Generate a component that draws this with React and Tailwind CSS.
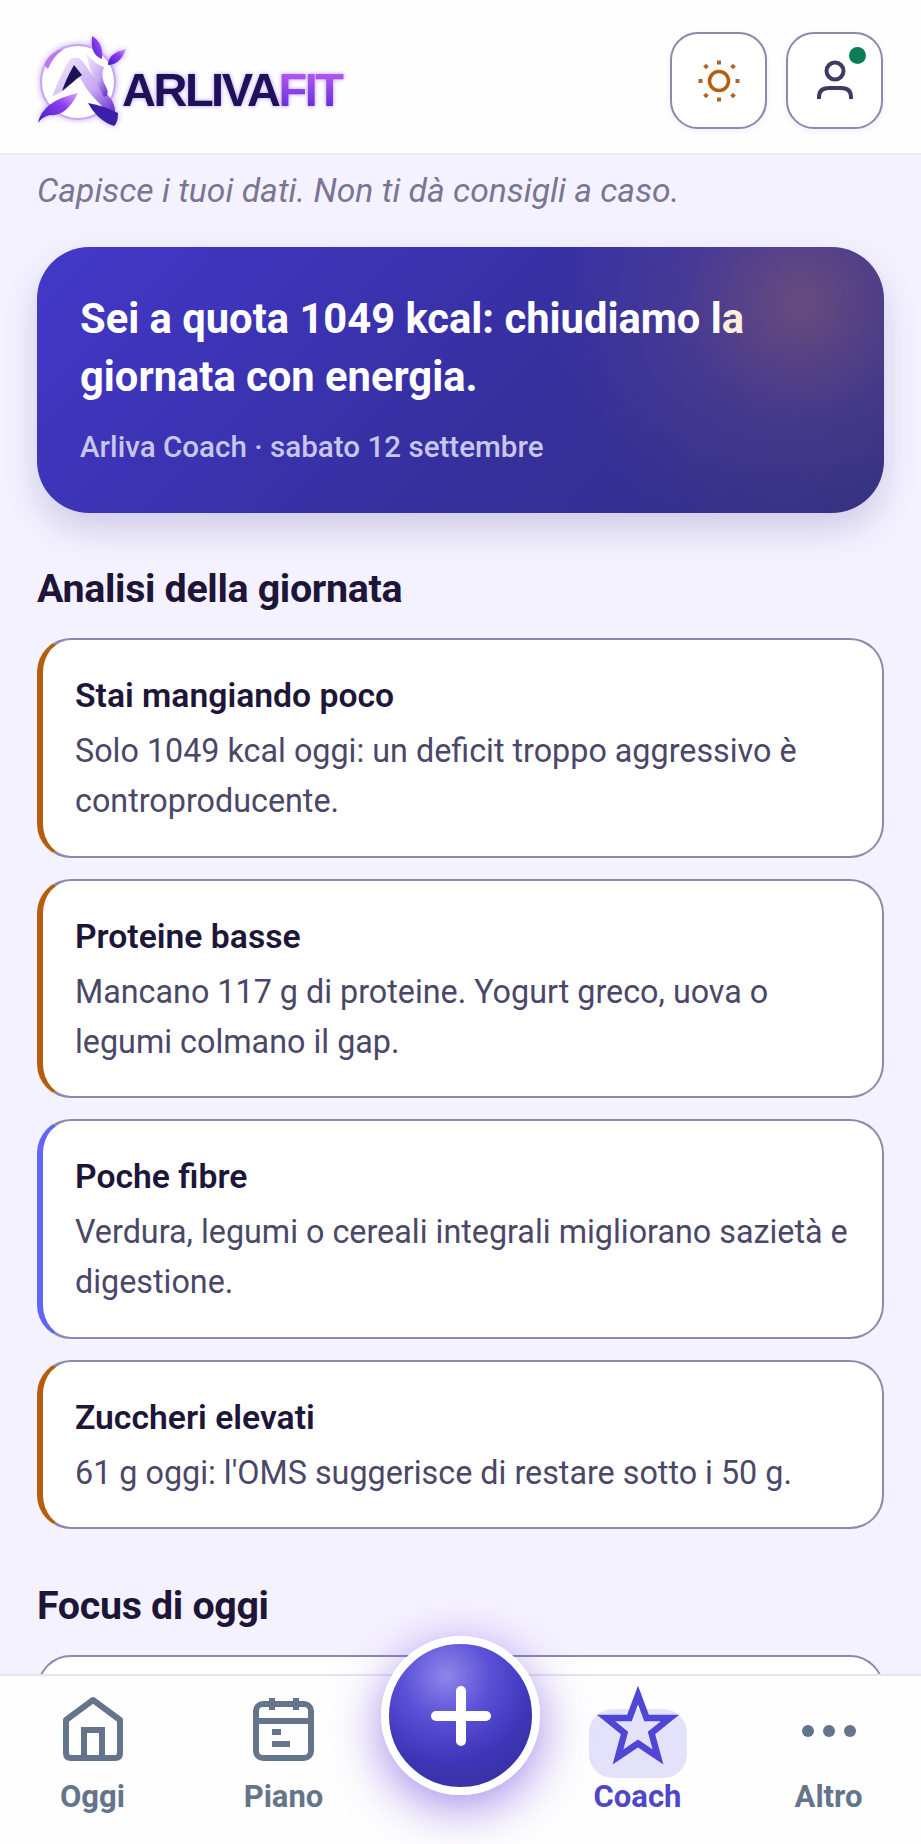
import React from "react";

const insights = [
    {
        title: "Stai mangiando poco",
        text: "Solo 1049 kcal oggi: un deficit troppo aggressivo è controproducente.",
        edge: "border-l-[#b45f10]",
    },
    {
        title: "Proteine basse",
        text: "Mancano 117 g di proteine. Yogurt greco, uova o legumi colmano il gap.",
        edge: "border-l-[#b45f10]",
    },
    {
        title: "Poche fibre",
        text: "Verdura, legumi o cereali integrali migliorano sazietà e digestione.",
        edge: "border-l-[#6366f1]",
    },
    {
        title: "Zuccheri elevati",
        text: "61 g oggi: l'OMS suggerisce di restare sotto i 50 g.",
        edge: "border-l-[#b45f10]",
    },
];

const LogoMark = () => (
    <svg width="96" height="92" viewBox="0 0 96 92" className="shrink-0 drop-shadow-[0_0_3px_#c4a5f5]">
        <defs>
            <linearGradient id="leaf" x1="0" y1="1" x2="1" y2="0">
                <stop offset="0" stopColor="#3b1fc4" />
                <stop offset="0.6" stopColor="#8b3df0" />
                <stop offset="1" stopColor="#d9a6f7" />
            </linearGradient>
            <linearGradient id="body" x1="0" y1="0" x2="1" y2="1">
                <stop offset="0" stopColor="#f6efff" />
                <stop offset="0.6" stopColor="#c7a6f2" />
                <stop offset="1" stopColor="#5a22c9" />
            </linearGradient>
        </defs>
        <circle cx="42" cy="47" r="37" fill="#fff" stroke="#c9a4f2" strokeWidth="2" />
        <path d="M8 30 Q14 16 28 14 Q18 20 12 34Z" fill="#b77bf0" />
        <path d="M56 1 Q68 8 66 24 Q54 20 56 1Z" fill="url(#leaf)" />
        <path d="M90 14 Q84 30 72 30 Q72 18 90 14Z" fill="url(#leaf)" />
        <path d="M34 24 Q24 40 16 62 L30 54 Q36 44 44 42 Q50 58 78 82 Q82 70 70 58 Q56 40 48 28 Q42 20 34 24Z" fill="url(#body)" />
        <path d="M38 30 Q30 44 26 56 L36 48 Q40 44 46 40Z" fill="#1d1258" />
        <path d="M50 18 Q60 30 68 32 Q64 42 70 52 Q74 60 68 62 Q58 44 54 34Z" fill="url(#body)" />
        <path d="M2 88 Q6 66 42 58 Q30 82 14 80 Q6 82 2 88Z" fill="url(#leaf)" />
        <path d="M52 68 Q66 70 82 78 Q82 88 78 91 Q62 86 52 68Z" fill="#3b1fa8" />
    </svg>
);

const Sun = () => (
    <svg width="48" height="48" viewBox="0 0 48 48">
        <circle cx="24" cy="24" r="9.5" fill="none" stroke="#b45f10" strokeWidth="3.5" />
        <g fill="#a9662b">
            <rect x="22" y="3.5" width="4" height="4" />
            <rect x="22" y="40.5" width="4" height="4" />
            <rect x="3.5" y="22" width="4" height="4" />
            <rect x="40.5" y="22" width="4" height="4" />
            <rect x="9" y="7.5" width="4" height="4" transform="rotate(45 11 9.5)" />
            <rect x="36" y="7.5" width="4" height="4" transform="rotate(45 38 9.5)" />
            <rect x="9" y="36.5" width="4" height="4" transform="rotate(45 11 38.5)" />
            <rect x="36" y="36.5" width="4" height="4" transform="rotate(45 38 38.5)" />
        </g>
    </svg>
);

const Person = () => (
    <svg width="48" height="48" viewBox="0 0 48 48">
        <circle cx="24" cy="14" r="8.5" fill="none" stroke="#3f3a63" strokeWidth="4" />
        <path d="M8 42 V40 Q8 31 18 31 H30 Q40 31 40 40 V42" fill="none" stroke="#3f3a63" strokeWidth="4" />
    </svg>
);

const HomeIcon = () => (
    <svg width="72" height="72" viewBox="0 0 72 72" fill="none" stroke="#64748b" strokeWidth="6" strokeLinejoin="round">
        <path d="M36 5 L63 25 V58 Q63 63 58 63 H14 Q9 63 9 58 V25 Z" />
        <path d="M27 63 V35 H45 V63" strokeLinejoin="miter" />
    </svg>
);

const CalendarIcon = () => (
    <svg width="72" height="72" viewBox="0 0 72 72" fill="none" stroke="#64748b" strokeWidth="6">
        <rect x="8" y="9" width="55" height="54" rx="7" />
        <path d="M8 26 H63" />
        <path d="M24 3 V15 M48 3 V15" />
        <rect x="24" y="34" width="9" height="6" fill="#64748b" stroke="none" />
        <rect x="24" y="46" width="18" height="6" fill="#64748b" stroke="none" />
    </svg>
);

const StarIcon = () => (
    <svg width="84" height="84" viewBox="0 0 84 84" fill="none" stroke="#4f46d5" strokeWidth="6.5" strokeLinejoin="miter">
        <path d="M42 9 L50.5 32 L74 32 L55.5 47 L62 71 L42 57.5 L22 71 L28.5 47 L10 32 L33.5 32 Z" />
    </svg>
);

const NavItem = ({ label, active, children }) => (
    <div className="flex flex-col items-center">
        <div className="relative flex h-[88px] w-full items-center justify-center">
            {children}
        </div>
        <span className={`mt-[4px] text-[31px] leading-[36px] font-bold ${active ? "text-[#4f46c8]" : "text-[#64748b]"}`}>
            {label}
        </span>
    </div>
);

const App = () => {
    return (
        <div className="relative flex h-[1844px] w-[921px] flex-col overflow-hidden bg-[#f5f2ff] font-['Roboto',sans-serif]">
            <header className="flex h-[155px] shrink-0 items-center justify-between border-b-2 border-[#ebe8f4] bg-[#fefefe] pt-[8px] pr-[38px] pl-[36px]">
                <div className="flex items-center">
                    <LogoMark />
                    <div className="mt-[18px] -ml-[10px] flex font-['Liberation_Sans',sans-serif] text-[47px] leading-none font-bold tracking-[-2.5px] drop-shadow-[0_0_2px_#b794f6]">
                        <span className="text-[#1d1258]">ARLIVA</span>
                        <span className="bg-gradient-to-b from-[#c65cf0] to-[#5a22d9] bg-clip-text pr-[3px] text-transparent">FIT</span>
                    </div>
                </div>
                <div className="flex gap-[19px]">
                    <button className="flex h-[97px] w-[97px] items-center justify-center rounded-[28px] border-2 border-[#8c88b0] bg-white shadow-[0_2px_6px_rgba(80,60,180,0.08)]">
                        <Sun />
                    </button>
                    <button className="relative flex h-[97px] w-[97px] items-center justify-center rounded-[28px] border-2 border-[#8c88b0] bg-white shadow-[0_2px_6px_rgba(80,60,180,0.08)]">
                        <Person />
                        <span className="absolute top-[13px] right-[15px] h-[17px] w-[17px] rounded-full bg-[#0a7d55]" />
                    </button>
                </div>
            </header>

            <main className="min-h-0 flex-1 overflow-hidden px-[37px]">
                <p className="mt-[15px] text-[33.7px] leading-[42px] text-[#7a7594] italic">
                    Capisce i tuoi dati. Non ti dà consigli a caso.
                </p>

                <section className="mt-[35px] h-[266px] rounded-[52px] bg-[radial-gradient(circle_at_763px_56px,rgba(165,110,100,0.45),rgba(125,90,130,0.24)_115px,rgba(67,56,202,0)_250px),linear-gradient(135deg,#4338ca_0%,#3730a3_50%,#312e81_100%)] px-[43px] pt-[43px] shadow-[0_16px_36px_rgba(49,46,129,0.2)]">
                    <h1 className="text-[41.7px] leading-[58px] font-bold text-white">
                        Sei a quota 1049 kcal: chiudiamo l<span className="text-[#fdeedb]">a</span>
                        <br />
                        giornata con energia.
                    </h1>
                    <p className="mt-[23px] text-[29.6px] leading-[36px] font-medium text-[#c9c6ec]">
                        Arliva Coach · sabato 12 settembre
                    </p>
                </section>

                <h2 className="mt-[53px] text-[39.4px] leading-[46px] font-bold tracking-[-0.34px] text-[#1e1638]">
                    Analisi della giornata
                </h2>

                <div className="mt-[26px] flex flex-col gap-[21px]">
                    {insights.map((item) => (
                        <article
                            key={item.title}
                            className={`rounded-[34px] border-2 border-l-[6px] border-[#8c88b0] bg-white pt-[34px] pr-[24px] pb-[29.5px] pl-[32px] ${item.edge}`}
                        >
                            <h3 className="text-[33.7px] leading-[44px] font-semibold text-[#1e1638]">
                                {item.title}
                            </h3>
                            <p className="mt-[8px] text-[32.3px] leading-[50px] text-[#4b4768]">
                                {item.text}
                            </p>
                        </article>
                    ))}
                </div>

                <h2 className="mt-[54px] text-[39.4px] leading-[46px] font-bold tracking-[-0.34px] text-[#1e1638]">
                    Focus di oggi
                </h2>
                <div className="mt-[26px] h-[120px] rounded-[34px] border-2 border-[#8c88b0] bg-white" />
            </main>

            <nav className="grid h-[170px] shrink-0 grid-cols-[185px_197px_157px_197px_185px] border-t-2 border-[#e6e2f2] bg-[#fefefe] pt-[11px]">
                <NavItem label="Oggi">
                    <HomeIcon />
                </NavItem>
                <NavItem label="Piano">
                    <CalendarIcon />
                </NavItem>
                <div />
                <NavItem label="Coach" active>
                    <span className="absolute top-[22px] left-[50px] h-[69px] w-[98px] rounded-[24px] bg-[#e4e1fb]" />
                    <span className="relative -mt-[6px]">
                        <StarIcon />
                    </span>
                </NavItem>
                <NavItem label="Altro">
                    <div className="flex gap-[9px]">
                        <span className="h-[12px] w-[12px] rounded-full bg-[#64748b]" />
                        <span className="h-[12px] w-[12px] rounded-full bg-[#64748b]" />
                        <span className="h-[12px] w-[12px] rounded-full bg-[#64748b]" />
                    </div>
                </NavItem>
            </nav>

            <button className="absolute top-[1636px] left-[381px] flex h-[159px] w-[159px] items-center justify-center rounded-full border-[8px] border-white bg-[radial-gradient(circle_at_40%_22%,#8f86ea_0%,#5a4fd6_32%,#3f35b8_62%,#312e95_100%)] shadow-[0_12px_50px_rgba(100,60,220,0.6)]">
                <svg width="60" height="60" viewBox="0 0 60 60" stroke="#fff" strokeWidth="10" strokeLinecap="round">
                    <path d="M30 5 V55 M5 30 H55" />
                </svg>
            </button>
        </div>
    );
};

export default App;
